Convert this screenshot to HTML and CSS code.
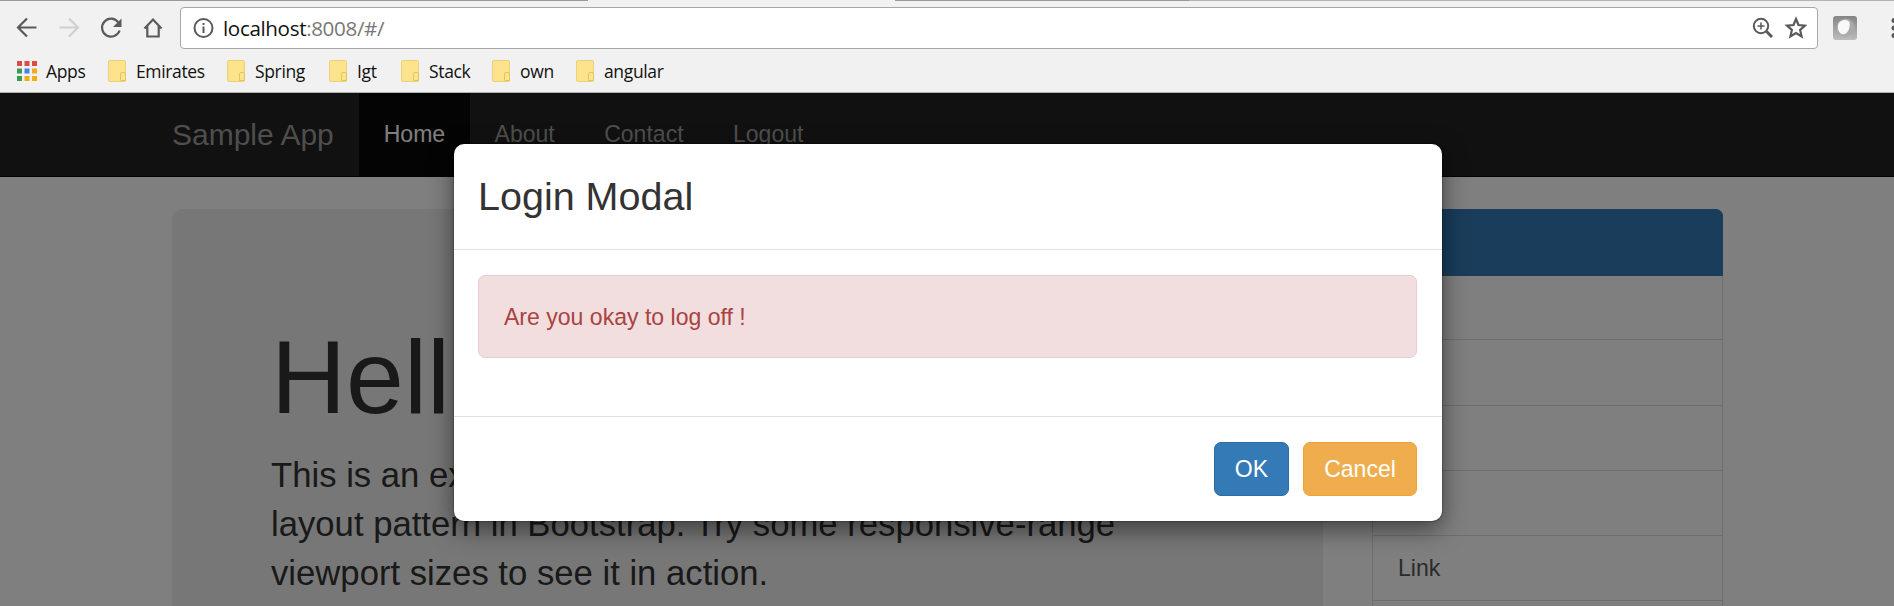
FILE: index.html
```html
<!DOCTYPE html>
<html lang="en">
<head>
<meta charset="utf-8">
<title>Sample App</title>
<link rel="stylesheet" href="styles.css">
</head>
<body>
<header class="browser">
  <div class="tab-edge"><span class="edge-left"></span><span class="edge-active"></span><span class="edge-mid"></span><span class="edge-right"></span></div>
  <div class="toolbar">
    <svg class="nav-icons" width="180" height="42" viewBox="0 0 180 42" fill="none" stroke="#5a5a5a" stroke-width="2.2">
      <path d="M36.5 20.5H18.5M27 11.5L18 20.5L27 29.5"/>
      <path stroke="#d0d0d0" d="M59.5 20.5H77.500M69 11.500L78 20.500L69 29.500"/>
      <path d="M118.300 15.300A9 9 0 1 0 119.600 23.500"/>
      <path fill="#5a5a5a" stroke="none" d="M121.500 11.500V20H113Z"/>
      <path d="M144.500 21.500L153 12.500L161.500 21.500M147.300 19V29.500H158.700V19" stroke-linejoin="miter"/>
    </svg>
    <div class="omnibox">
      <svg class="info" width="22" height="22" viewBox="0 0 22 22"><circle cx="10.500" cy="11" r="9" fill="none" stroke="#5a5a5a" stroke-width="2"/><path d="M10.500 9.500V16M10.500 6V8" stroke="#5a5a5a" stroke-width="2"/></svg>
      <div class="url">localhost<span class="url-rest">:8008/#/</span></div>
      <svg class="box-icons" width="58" height="26" viewBox="0 0 58 26" fill="none" stroke="#5a5a5a">
        <circle cx="12" cy="11" r="7.200" stroke-width="2"/><path stroke-width="3" d="M17.300 16.300L23 22"/><path stroke-width="1.500" d="M12 7.500V14.500M8.500 11H15.500"/>
        <path stroke-width="2.200" d="M47 4L49.500 10L56 10.600L51.100 14.900L52.600 21.500L47 18L41.400 21.500L42.900 14.900L38 10.600L44.500 10Z"/>
      </svg>
    </div>
    <svg class="extension" width="24" height="24" viewBox="0 0 24 24"><defs><linearGradient id="tile" x1="0" y1="0" x2="0" y2="1"><stop offset="0" stop-color="#858585"/><stop offset="1" stop-color="#bcbcbc"/></linearGradient></defs><rect width="24" height="24" rx="3" fill="url(#tile)"/><circle cx="12.500" cy="11.500" r="9" fill="#aaa"/><path d="M5 10C5 4 14 2 16.500 6C17.500 12 15 18 10 18.500C6 17.500 4.500 13.500 5 10Z" fill="#f8f8f8"/></svg>
    <svg class="menu" width="5" height="24" viewBox="0 0 5 24" fill="#5a5a5a"><circle cx="4" cy="4.500" r="2.500"/><circle cx="4" cy="12" r="2.500"/><circle cx="4" cy="19.500" r="2.500"/></svg>
  </div>
  <nav class="bookmarks">
    <div class="bookmark apps"><svg width="20" height="20" viewBox="0 0 20 20"><g fill="#dc4a40"><path d="M0 0h5v5H0zM7.500 0h5v5h-5zM15 0h5v5h-5z"/></g><path fill="#3b9b52" d="M0 7.500h5v5H0zM0 15h5v5H0z"/><path fill="#3f83ef" d="M7.500 7.500h5v5h-5z"/><path fill="#f2ac18" d="M15 7.500h5v5h-5zM7.500 15h5v5h-5zM15 15h5v5h-5z"/></svg><span>Apps</span></div>
    <div class="bookmark emirates"><i class="folder"></i><span>Emirates</span></div>
    <div class="bookmark spring"><i class="folder"></i><span>Spring</span></div>
    <div class="bookmark igt"><i class="folder"></i><span>Igt</span></div>
    <div class="bookmark stack"><i class="folder"></i><span>Stack</span></div>
    <div class="bookmark own"><i class="folder"></i><span>own</span></div>
    <div class="bookmark angular"><i class="folder"></i><span>angular</span></div>
  </nav>
</header>
<div class="page">
  <nav class="navbar">
    <div class="brand">Sample App</div>
    <div class="nav-item active">Home</div>
    <div class="nav-item">About</div>
    <div class="nav-item">Contact</div>
    <div class="nav-item">Logout</div>
  </nav>
  <main class="content">
    <section class="jumbotron">
      <h1>Hello, world!</h1>
      <p>This is an example to show the potential of an offcanvas layout pattern in Bootstrap. Try some responsive-range viewport sizes to see it in action.</p>
    </section>
    <aside class="list-group">
      <div class="list-item active"></div>
      <div class="list-item"></div>
      <div class="list-item"></div>
      <div class="list-item"></div>
      <div class="list-item"></div>
      <div class="list-item">Link</div>
      <div class="list-item"></div>
    </aside>
  </main>
  <div class="backdrop">
    <div class="modal">
      <div class="modal-header"><h3>Login Modal</h3></div>
      <div class="modal-body"><div class="alert">Are you okay to log off !</div></div>
      <div class="modal-footer"><button class="btn primary">OK</button><button class="btn warning">Cancel</button></div>
    </div>
  </div>
</div>
</body>
</html>
```
FILE: styles.css
```css
* { box-sizing: border-box; }
body {
  margin: 0;
  height: 606px;
  overflow: hidden;
  display: flex;
  flex-direction: column;
  font-family: "Liberation Sans", Arial, sans-serif;
  font-size: 23.05px;
  color: #333;
}
.browser {
  height: 93px;
  flex: none;
  background: #f1f1f1;
  border-bottom: 1px solid #b3b3b3;
  font-family: "Open Sans", "Noto Sans", sans-serif;
  color: #111;
}
.tab-edge { display: flex; height: 1px; }
.edge-left { width: 588px; background: #999; }
.edge-active { width: 307px; }
.edge-mid { width: 294px; background: #999; }
.edge-right { flex: 1; background: #b3b3b3; }
.toolbar { display: flex; height: 48px; padding-top: 6px; }
.nav-icons { flex: none; }
.omnibox {
  width: 1638px;
  height: 42px;
  flex: none;
  display: flex;
  align-items: center;
  padding: 0 10px 0 12px;
  background: #fff;
  border: 1px solid #a6a6a6;
  border-radius: 4px;
}
.url {
  flex: 1;
  margin-left: 8px;
  font-size: 20.6px;
  letter-spacing: -0.35px;
  line-height: 40px;
}
.url-rest { color: #777; }
.extension { margin: 9px 0 0 15px; flex: none; }
.menu { margin: 9px 0 0 33px; flex: none; }
.bookmarks { display: flex; padding: 9px 0 0 17px; font-size: 17.5px; letter-spacing: -0.35px; }
.bookmark { display: flex; align-items: center; height: 26px; line-height: 26px; white-space: nowrap; flex: none; }
.apps { width: 91px; gap: 9px; }
.emirates { width: 119px; }
.spring { width: 102px; }
.igt { width: 72px; }
.stack { width: 91px; }
.own { width: 84px; }
.angular { width: 120px; }
.folder {
  position: relative;
  width: 18px;
  height: 22px;
  margin-right: 10px;
  flex: none;
  background: #fde48c;
  border: 1px solid #ecd177;
  border-radius: 2px;
}
.folder::after {
  content: "";
  position: absolute;
  right: -1px;
  bottom: 0;
  width: 4px;
  height: 7px;
  border: 1px solid #e3c65a;
  border-radius: 2px 2px 0 0;
}
.page { position: relative; flex: 1; overflow: hidden; background: #fff; }
.navbar {
  display: flex;
  height: 84px;
  padding-left: 172px;
  background: #222;
  border-bottom: 1px solid #080808;
  line-height: 82px;
  color: #9d9d9d;
}
.brand { width: 187px; font-size: 30px; line-height: 84px; white-space: nowrap; }
.nav-item { padding: 0 24.7px; }
.nav-item.active { background: #080808; color: #fff; }
.content { display: flex; gap: 49px; padding: 32px 171px 0 172px; }
.jumbotron {
  width: 1151px;
  height: 520px;
  flex: none;
  padding: 111px 99px 0;
  background: #eee;
  border-radius: 10px;
}
.jumbotron h1 { margin: 0; font-size: 104px; font-weight: 400; line-height: 114px; }
.jumbotron p { margin: 17px 0 0; width: 900px; font-size: 34.68px; line-height: 49.2px; }
.list-group { width: 351px; }
.list-item {
  height: 66.3px;
  margin-bottom: -1px;
  padding: 0 25px;
  border: 1px solid #ddd;
  line-height: 64px;
  color: #555;
}
.list-item.active {
  position: relative;
  height: 67px;
  margin-bottom: -2px;
  background: #337ab7;
  border-color: #337ab7;
  border-radius: 7px 7px 0 0;
}
.backdrop { position: absolute; inset: 0; padding: 51px 452px 0 454px; background: rgba(0, 0, 0, .5); }
.modal {
  height: 377px;
  background: #fff;
  border-radius: 10px;
  box-shadow: 0 8px 25px rgba(0, 0, 0, .5), 0 0 1px 1px rgba(0, 0, 0, .2);
}
.modal-header { height: 106px; padding: 30px 25px 0 24px; border-bottom: 1px solid #e2e2e2; }
.modal-header h3 { margin: 0; font-size: 39.5px; font-weight: 400; line-height: 44px; }
.modal-body { height: 166px; padding: 25px 25px 0 24px; }
.alert {
  height: 83px;
  padding: 0 25px;
  background: #f2dede;
  border: 1px solid #e6cdd1;
  border-radius: 7px;
  color: #a94442;
  line-height: 83px;
}
.modal-footer { display: flex; justify-content: flex-end; gap: 14px; padding: 25px 25px 0; border-top: 1px solid #e2e2e2; }
.btn {
  height: 54px;
  padding: 0;
  border: 1px solid;
  border-radius: 7px;
  font: inherit;
  color: #fff;
}
.primary { width: 75px; background: #337ab7; border-color: #2e6da4; }
.warning { width: 114px; background: #f0ad4e; border-color: #eea236; }
```
